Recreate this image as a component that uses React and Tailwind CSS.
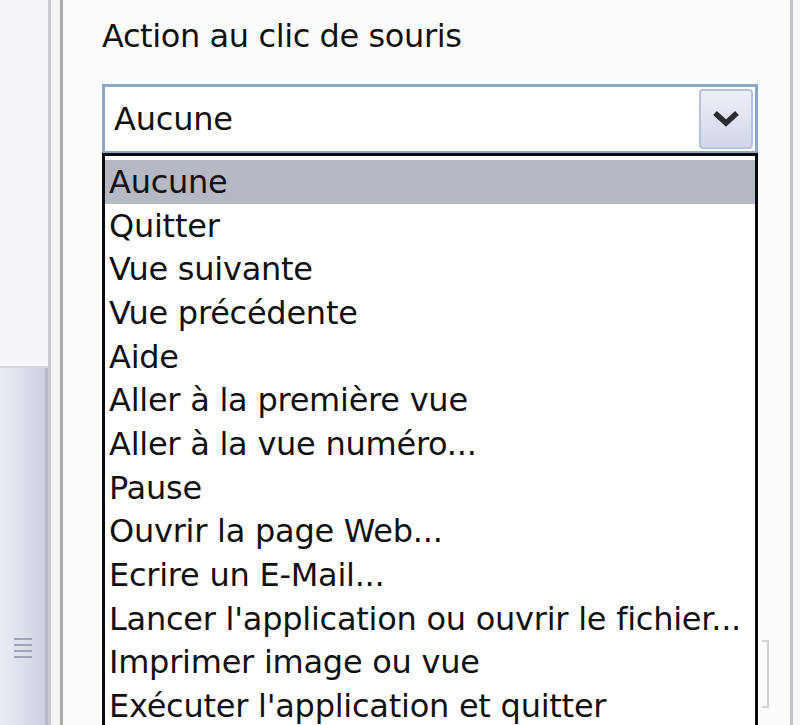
const items = [
  "Aucune",
  "Quitter",
  "Vue suivante",
  "Vue précédente",
  "Aide",
  "Aller à la première vue",
  "Aller à la vue numéro...",
  "Pause",
  "Ouvrir la page Web...",
  "Ecrire un E-Mail...",
  "Lancer l'application ou ouvrir le fichier...",
  "Imprimer image ou vue",
  "Exécuter l'application et quitter",
];

function ScrollBar() {
  return (
    <div className="w-[51px] flex flex-col border-r-[3px] border-[#c9cad0]">
      <div className="h-[368px] bg-[#f4f5f8] border-b-[2px] border-[#d6d8e0]" />
      <div className="flex-1 flex justify-center bg-gradient-to-r from-[#eceef5] via-[#dcdfeb] to-[#cfd3e2] border-r-[3px] border-[#b9bcc8]">
        <div className="flex flex-col gap-[4px] mt-[270px]">
          <div className="w-[18px] h-[2px] bg-[#9ea3b8]" />
          <div className="w-[18px] h-[2px] bg-[#9ea3b8]" />
          <div className="w-[18px] h-[2px] bg-[#9ea3b8]" />
          <div className="w-[18px] h-[2px] bg-[#9ea3b8]" />
        </div>
      </div>
    </div>
  );
}

export default function App() {
  return (
    <div
      className="w-[800px] h-[725px] overflow-hidden flex bg-[#fbfbfb] text-[#111]"
      style={{ fontFamily: '"DejaVu Sans", Verdana, sans-serif' }}
    >
      <ScrollBar />
      <div className="w-[12px] bg-[#f6f6f6] border-r-[3px] border-[#a9a9ae]" />
      <div className="w-[730px] border-r-[3px] border-[#c4c4c8] bg-[#fcfcfc] pl-[39px] pr-[32px] pt-[14px] relative">
        <div className="text-[32px] leading-[44px] tracking-[-0.4px]">
          Action au clic de souris
        </div>
        <div className="mt-[26px] h-[70px] border-[3px] border-[#8ea6c6] bg-white flex items-center justify-between pl-[9px] pr-[2px]">
          <span className="text-[32px] tracking-[-0.2px] leading-none">Aucune</span>
          <div className="w-[54px] h-[60px] rounded-[4px] border-[2px] border-[#b7c2dc] bg-gradient-to-b from-[#eef0f8] to-[#d2d6e6] flex items-center justify-center">
            <svg width="28" height="18" viewBox="0 0 28 18">
              <path d="M3 3 L14 13 L25 3" fill="none" stroke="#2b2b33" strokeWidth="5.5" strokeLinejoin="miter" />
            </svg>
          </div>
        </div>
        <div className="-mt-[1px] border-[3px] border-b-0 border-[#0c0c10] bg-white pt-[4px] h-[600px]">
          {items.map((t, i) => (
            <div
              key={t}
              className={
                "h-[43.7px] flex items-center pl-[4px] text-[32px] tracking-[-0.25px] leading-none whitespace-nowrap " +
                (i === 0 ? "bg-[#b6b8c4]" : "")
              }
            >
              {t}
            </div>
          ))}
        </div>
        <div className="absolute left-[699px] top-[640px] w-[7px] h-[68px] border-[2px] border-l-0 border-[#d2d2d6]" />
      </div>
      <div className="flex-1 bg-[#f7f7f9]" />
    </div>
  );
}
